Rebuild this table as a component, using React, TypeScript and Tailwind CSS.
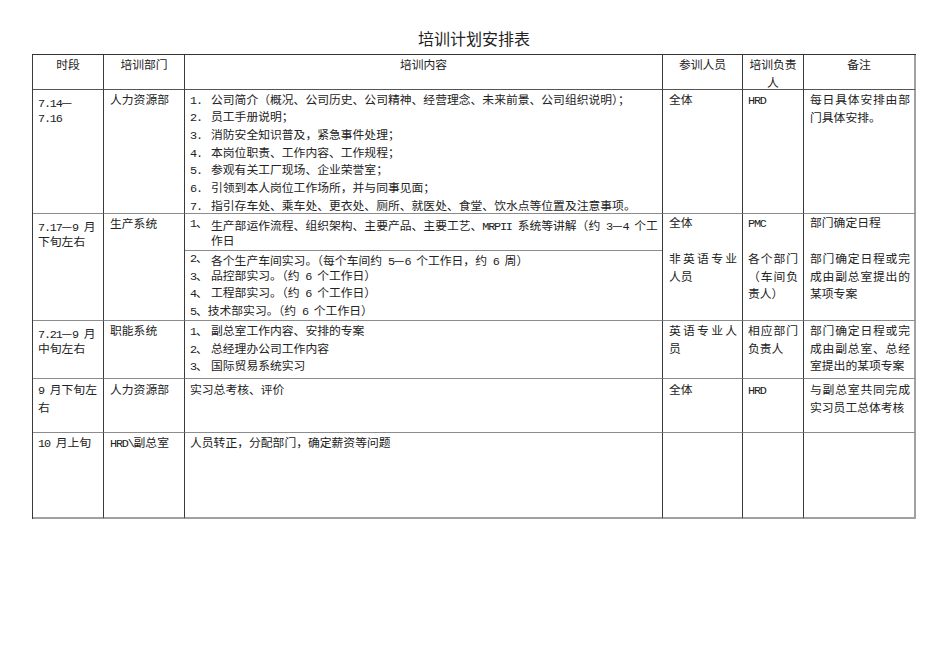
import React from "react";

const L = ({ children }: { children: React.ReactNode }) => (
  <span className="tracking-[-1.2px]">{children}</span>
);
const D = () => <span className="font-['Noto_Sans_CJK_SC',sans-serif]">—</span>;

const Cell = ({
  children,
  className = "",
}: {
  children?: React.ReactNode;
  className?: string;
}) => (
  <div
    className={`border-r border-b border-r-[#3a3a3a] border-b-[#8c8c8c] ${className}`}
  >
    {children}
  </div>
);

const Ln = ({ children }: { children: React.ReactNode }) => (
  <div className="h-[17.7px] whitespace-nowrap overflow-visible">{children}</div>
);

const Item = ({ n, children }: { n: React.ReactNode; children: React.ReactNode }) => (
  <div className="flex whitespace-nowrap h-[17.7px]">
    <span className="w-[21px] shrink-0">{n}</span>
    <span>{children}</span>
  </div>
);

const HEAD = "border-b-[#555555] text-center pt-[3px]";

export default function App() {
  return (
    <div className="font-['Liberation_Mono','Noto_Sans_CJK_SC',monospace] text-[11.8px] leading-[17.7px] text-[#222222] bg-white w-[950px] h-[672px] pl-[32px]">
      <div className="h-[54px] pt-[28px] w-[884px] text-center text-[16px] leading-[20px] font-['Noto_Sans_CJK_SC',sans-serif]">
        培训计划安排表
      </div>
      <div className="grid grid-cols-[71px_81px_478px_80px_61px_112px] grid-rows-[35px_124px_107px_58px_54px_86px] w-[884px] border-l border-t border-l-[#3a3a3a] border-t-[#333333]">
        {/* header */}
        <Cell className={HEAD}>时段</Cell>
        <Cell className={HEAD}>培训部门</Cell>
        <Cell className={HEAD}>培训内容</Cell>
        <Cell className={HEAD}>参训人员</Cell>
        <Cell className={`${HEAD} px-[5px]`}>培训负责人</Cell>
        <Cell className={`${HEAD} border-r-2 border-r-[#a0a0a0]`}>备注</Cell>

        {/* row 1 */}
        <Cell className="pl-[5px] pt-[3px]">
          <Ln>
            <L>7.14</L>
            <D />
          </Ln>
          <Ln>
            <L>7.16</L>
          </Ln>
        </Cell>
        <Cell className="pl-[6px] pt-[3px]">人力资源部</Cell>
        <Cell className="pl-[5px] pt-[2.5px]">
          <Item n={<L>1.</L>}>公司简介（概况、公司历史、公司精神、经营理念、未来前景、公司组织说明）；</Item>
          <Item n={<L>2.</L>}>员工手册说明；</Item>
          <Item n={<L>3.</L>}>消防安全知识普及，紧急事件处理；</Item>
          <Item n={<L>4.</L>}>本岗位职责、工作内容、工作规程；</Item>
          <Item n={<L>5.</L>}>参观有关工厂现场、企业荣誉室；</Item>
          <Item n={<L>6.</L>}>引领到本人岗位工作场所，并与同事见面；</Item>
          <Item n={<L>7.</L>}>指引存车处、乘车处、更衣处、厕所、就医处、食堂、饮水点等位置及注意事项。</Item>
        </Cell>
        <Cell className="pl-[6px] pr-[5px] pt-[3px]">全体</Cell>
        <Cell className="pl-[5px] pr-[5px] pt-[3px]">
          <L>HRD</L>
        </Cell>
        <Cell className="pl-[6px] pr-[4px] pt-[3px] text-justify border-r-2 border-r-[#a0a0a0]">
          每日具体安排由部门具体安排。
        </Cell>

        {/* row 2 */}
        <Cell className="pl-[5px] pt-[3px]">
          <Ln>
            <L>7.17</L>
            <D />
            <L>9 </L>月
          </Ln>
          <Ln>下旬左右</Ln>
        </Cell>
        <Cell className="pl-[6px] pt-[3px]">生产系统</Cell>
        <Cell className="flex flex-col">
          <div className="h-[37px] shrink-0 border-b border-b-[#8c8c8c] pl-[5px] pt-[2px]">
            <div className="flex whitespace-nowrap">
              <span className="w-[21px] shrink-0">
                <L>1</L>、
              </span>
              <div>
                <Ln>
                  生产部运作流程、组织架构、主要产品、主要工艺、<L>MRPII </L>系统等讲解（约<L> 3</L>
                  <D />
                  <L>4 </L>个工
                </Ln>
                <Ln>作日</Ln>
              </div>
            </div>
          </div>
          <div className="pl-[5px]">
            <Item n={<><L>2</L>、</>}>
              各个生产车间实习。（每个车间约<L> 5</L>
              <D />
              <L>6 </L>个工作日，约<L> 6 </L>周）
            </Item>
            <Item n={<><L>3</L>、</>}>
              品控部实习。（约<L> 6 </L>个工作日）
            </Item>
            <Item n={<><L>4</L>、</>}>
              工程部实习。（约<L> 6 </L>个工作日）
            </Item>
            <Ln>
              <L>5</L>、技术部实习。（约<L> 6 </L>个工作日）
            </Ln>
          </div>
        </Cell>
        <Cell className="flex flex-col pl-[6px] pr-[5px]">
          <div className="h-[37px] shrink-0 pt-[2px]">全体</div>
          <div className="text-justify pt-[1px]">非英语专业人员</div>
        </Cell>
        <Cell className="flex flex-col pl-[5px] pr-[5px]">
          <div className="h-[37px] shrink-0 pt-[2px]">
            <L>PMC</L>
          </div>
          <div className="text-justify pt-[1px]">各个部门（车间负责人）</div>
        </Cell>
        <Cell className="flex flex-col pl-[6px] pr-[4px] border-r-2 border-r-[#a0a0a0]">
          <div className="h-[37px] shrink-0 pt-[2px]">部门确定日程</div>
          <div className="text-justify pt-[1px]">部门确定日程或完成由副总室提出的某项专案</div>
        </Cell>

        {/* row 3 */}
        <Cell className="pl-[5px] pt-[3px]">
          <Ln>
            <L>7.21</L>
            <D />
            <L>9 </L>月
          </Ln>
          <Ln>中旬左右</Ln>
        </Cell>
        <Cell className="pl-[6px] pt-[3px]">职能系统</Cell>
        <Cell className="pl-[5px] pt-[3px]">
          <Item n={<><L>1</L>、</>}>副总室工作内容、安排的专案</Item>
          <Item n={<><L>2</L>、</>}>总经理办公司工作内容</Item>
          <Item n={<><L>3</L>、</>}>国际贸易系统实习</Item>
        </Cell>
        <Cell className="pl-[6px] pr-[5px] pt-[3px] text-justify">英语专业人员</Cell>
        <Cell className="pl-[5px] pr-[5px] pt-[3px] text-justify">相应部门负责人</Cell>
        <Cell className="pl-[6px] pr-[4px] pt-[3px] text-justify border-r-2 border-r-[#a0a0a0]">
          部门确定日程或完成由副总室、总经室提出的某项专案
        </Cell>

        {/* row 4 */}
        <Cell className="pl-[5px] pt-[4px]">
          <Ln>
            <L>9 </L>月下旬左
          </Ln>
          <Ln>右</Ln>
        </Cell>
        <Cell className="pl-[6px] pt-[4px]">人力资源部</Cell>
        <Cell className="pl-[5px] pt-[4px]">实习总考核、评价</Cell>
        <Cell className="pl-[6px] pr-[5px] pt-[4px]">全体</Cell>
        <Cell className="pl-[5px] pr-[5px] pt-[4px]">
          <L>HRD</L>
        </Cell>
        <Cell className="pl-[6px] pr-[4px] pt-[4px] text-justify border-r-2 border-r-[#a0a0a0]">
          与副总室共同完成实习员工总体考核
        </Cell>

        {/* row 5 */}
        <Cell className="pl-[5px] pt-[3px] border-b-2 border-b-[#a0a0a0]">
          <Ln>
            <L>10 </L>月上旬
          </Ln>
        </Cell>
        <Cell className="pl-[6px] pt-[3px] border-b-2 border-b-[#a0a0a0]">
          <Ln>
            <L>HRD\</L>副总室
          </Ln>
        </Cell>
        <Cell className="pl-[5px] pt-[3px] border-b-2 border-b-[#a0a0a0]">
          人员转正，分配部门，确定薪资等问题
        </Cell>
        <Cell className="border-b-2 border-b-[#a0a0a0]" />
        <Cell className="border-b-2 border-b-[#a0a0a0]" />
        <Cell className="border-b-2 border-b-[#a0a0a0] border-r-2 border-r-[#a0a0a0]" />
      </div>
    </div>
  );
}
